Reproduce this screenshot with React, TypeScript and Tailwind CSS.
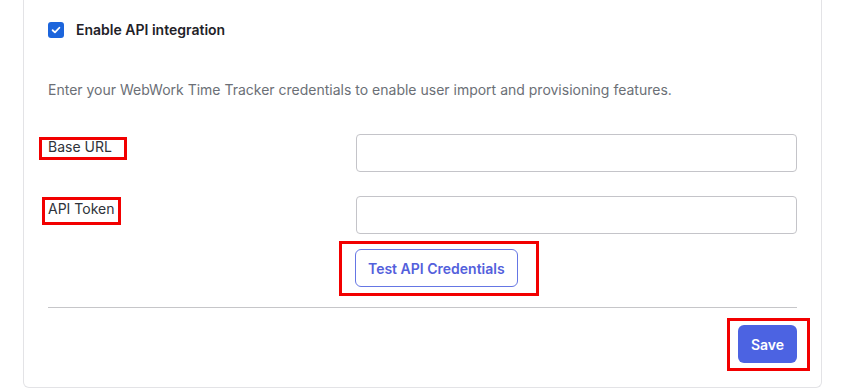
import React, { useState } from 'react';

const RedMark: React.FC<{ className: string }> = ({ className }) => (
  <span className={`pointer-events-none absolute border-[3px] border-[#f20000] ${className}`} />
);

const App: React.FC = () => {
  const [enabled, setEnabled] = useState(true);
  const [baseUrl, setBaseUrl] = useState('');
  const [token, setToken] = useState('');

  return (
    <div className="min-h-screen bg-white font-['Inter',sans-serif] text-[14px]">
      <div className="ml-[23px] w-[799px] rounded-b-md border-x border-b border-[#e3e3e6] bg-white px-6 pb-6 pt-5">
        {/* Enable toggle */}
        <label className="flex h-5 cursor-pointer items-center gap-3">
          <input type="checkbox" className="sr-only" checked={enabled} onChange={() => setEnabled(!enabled)} />
          <span className={`flex h-4 w-4 items-center justify-center rounded-[3px] ${enabled ? 'bg-[#1c65dc]' : 'border border-gray-400 bg-white'}`}>
            {enabled && (
              <svg viewBox="0 0 16 16" className="h-3 w-3" fill="none" stroke="white" strokeWidth="2.4" strokeLinecap="round" strokeLinejoin="round">
                <path d="M3.5 8.3 6.6 11.2 12.5 5" />
              </svg>
            )}
          </span>
          <span className="font-semibold leading-5 text-[#1f2228]">Enable API integration</span>
        </label>

        <p className="mt-10 leading-5 text-[#6b6f76]">
          Enter your WebWork Time Tracker credentials to enable user import and provisioning features.
        </p>

        {/* Credentials */}
        <div className="mt-[34px] grid grid-cols-[308px_1fr] gap-y-6">
          <div className="pt-0.5">
            <span className="relative inline-block leading-5 text-[#2f333a]">
              Base URL
              <RedMark className="-left-[9px] top-0 h-[23px] w-[88px]" />
            </span>
          </div>
          <input
            value={baseUrl}
            onChange={(e) => setBaseUrl(e.target.value)}
            className="h-[38px] w-full rounded border border-[#c4c4c9] px-3 outline-none"
          />

          <div className="pt-0.5">
            <span className="relative inline-block leading-5 text-[#2f333a]">
              API Token
              <RedMark className="-left-[6px] -top-[2px] h-[28px] w-[79px]" />
            </span>
          </div>
          <input
            value={token}
            onChange={(e) => setToken(e.target.value)}
            className="h-[38px] w-full rounded border border-[#c4c4c9] px-3 outline-none"
          />
        </div>

        <div className="mt-[15px] pl-[307px]">
          <span className="relative inline-block">
            <button className="h-[38px] rounded-md border border-[#6576e4] bg-white px-[12px] font-semibold text-[#5360dc]">
              Test API Credentials
            </button>
            <RedMark className="-left-[16px] -top-[8px] h-[55px] w-[200px]" />
          </span>
        </div>

        <div className="mt-5 border-t border-[#c6c6c9]" />

        <div className="mt-[17px] flex justify-end">
          <span className="relative inline-block">
            <button className="h-[38px] w-[59px] rounded-md bg-[#4c63e2] font-semibold text-white">Save</button>
            <RedMark className="-left-[11px] -top-[7px] h-[53px] w-[83px]" />
          </span>
        </div>
      </div>
    </div>
  );
};

export default App;
